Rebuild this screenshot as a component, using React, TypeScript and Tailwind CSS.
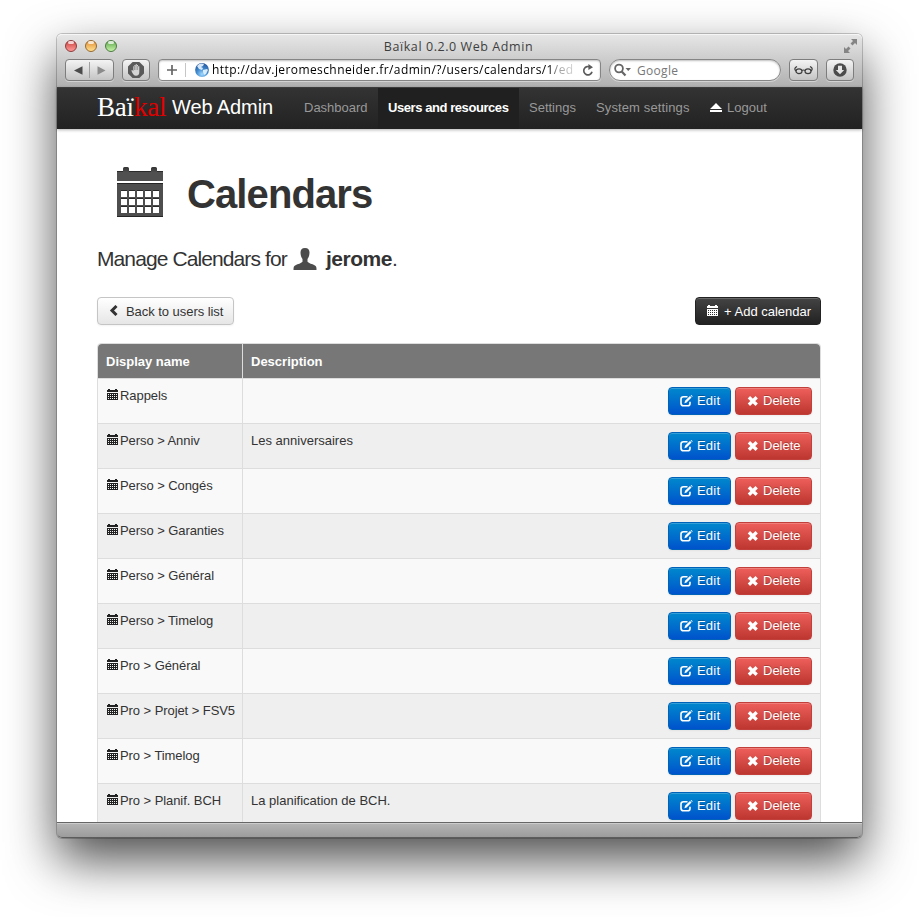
import React from "react";

function CalendarSmall({ className = "" }: { className?: string }) {
  return (
    <svg width="11" height="11" viewBox="0 0 11 11" className={className} fill="currentColor" shapeRendering="crispEdges">
      <rect x="1" y="0" width="2" height="1" />
      <rect x="8" y="0" width="2" height="1" />
      <rect x="0" y="1" width="11" height="2" />
      <path fillRule="evenodd" d="M0 4h11v7H0zM1 5v1h1V5zM3 5v1h1V5zM5 5v1h1V5zM7 5v1h1V5zM9 5v1h1V5zM1 7v1h1V7zM3 7v1h1V7zM5 7v1h1V7zM7 7v1h1V7zM9 7v1h1V7zM1 9v1h1V9zM3 9v1h1V9zM5 9v1h1V9zM7 9v1h1V9zM9 9v1h1V9z" />
    </svg>
  );
}

function CalendarLarge() {
  const cells = [0, 1, 2].flatMap((r) => [0, 1, 2, 3, 4].map((c) => [c, r]));
  return (
    <svg width="46" height="50" viewBox="0 0 46 50" className="shrink-0">
      <defs>
        <linearGradient id="calTop" x1="0" y1="0" x2="0" y2="1">
          <stop offset="0" stopColor="#333" />
          <stop offset="0.4" stopColor="#505050" />
          <stop offset="1" stopColor="#505050" />
        </linearGradient>
      </defs>
      <path d="M0 14V4h6V1.500q0-1.500 1.500-1.500h3Q12 0 12 1.500V4h22V1.500Q34 0 35.500 0h3Q40 0 40 1.500V4h6v10z" fill="url(#calTop)" />
      <path d="M0 4h6v1H0zM12 4h22v1H12zM40 4h6v1h-6z" fill="#2b2b2b" />
      <path d="M0 16h46v34H0z" fill="#4e4e4e" />
      <path d="M0 16h46v1H0zM0 49h46v1H0z" fill="#252525" />
      {cells.map(([c, r]) => (
        <g key={`${c}-${r}`}>
          <rect x={4 + c * 8} y={23 + r * 8} width="6" height="7" fill="#292929" />
          <rect x={4 + c * 8} y={24 + r * 8} width="6" height="6" fill="#fff" />
        </g>
      ))}
    </svg>
  );
}

function UserIcon() {
  return (
    <svg width="24" height="22" viewBox="0 0 24 22" className="shrink-0">
      <path d="M12 0C8.800 0 7.500 1.800 7.500 4.600c0 3 1 5 2 6.500v2.700C8 15.500 5 16 2.500 17.200.500 18.200.500 19.500.500 22h23c0-2.500 0-3.800-2-4.800C19 16 16 15.500 14.500 13.800v-2.700c1-1.500 2-3.500 2-6.500C16.500 1.800 15.200 0 12 0z" fill="#4c4c4c" />
    </svg>
  );
}

function EditIcon() {
  return (
    <svg width="13" height="12" viewBox="0 0 13 12" className="shrink-0" fill="none" stroke="#fff">
      <path d="M7.500 1.800H3.500Q1 1.800 1 4.200v4Q1 10.800 3.500 10.800h4Q10 10.800 10 8.400V6.800" strokeWidth="1.600" />
      <path d="M4.400 8.200l.7-2.400L10 1l1.500 1.500-4.900 5z" fill="#fff" stroke="none" />
      <path d="M10.600.400l.8-.400 1.200 1.200-.5.900z" fill="#fff" stroke="none" />
    </svg>
  );
}

function DeleteIcon() {
  return (
    <svg width="12" height="10" viewBox="0 0 12 10" className="shrink-0">
      <path d="M1.900 1.200L9.700 8.800M9.700 1.200L1.900 8.800" stroke="#fff" strokeWidth="3.300" />
    </svg>
  );
}

const toolBtn =
  "box-border flex h-[22px] items-center justify-center rounded-[4px] border border-[#7d7d7d] bg-linear-to-b from-[#f4f4f4] to-[#c4c4c4] shadow-[0_1px_0_rgba(255,255,255,0.4)]";

function Light({ tone }: { tone: string }) {
  return (
    <span className={`flex h-3 w-3 justify-center rounded-full border ${tone}`}>
      <span className="h-[3px] w-[6px] rounded-full bg-white/75" />
    </span>
  );
}

function Chrome() {
  return (
    <header className="h-[53px] rounded-t-[5px] border-t border-[#f6f6f6] bg-linear-to-b from-[#e6e6e6] to-[#b0b0b0] font-['Open_Sans','Noto_Sans',sans-serif]">
      <div className="flex h-[24px] items-center pr-[4px] pl-[8px]">
        <div className="mb-[2px] flex w-[60px] gap-2">
          <Light tone="border-[#8e3a3c] bg-linear-to-b from-[#c9403f] to-[#ff9a98]" />
          <Light tone="border-[#96682c] bg-linear-to-b from-[#e08f30] to-[#ffe08e]" />
          <Light tone="border-[#4b7a40] bg-linear-to-b from-[#5da84c] to-[#c5f3a8]" />
        </div>
        <h2 className="mb-px flex-1 pr-[11px] text-center text-[12.500px] leading-[20px] tracking-[0.570px] text-[#3e3e3e]">Baïkal 0.2.0 Web Admin</h2>
        <svg width="55" height="14" viewBox="0 0 55 14" fill="#858585" className="mb-[2px]">
          <path d="M48 0h6v6l-2-2-2.500 2.500-2-2L50 2zM41 14V8l2 2 2.500-2.500 2 2L45 12l2 2z" />
        </svg>
      </div>
      <div className="flex pl-[8px]">
        <div className={`${toolBtn} w-[49px]`}>
          <svg width="47" height="20" viewBox="0 0 47 20">
            <path d="M8 10.500l8.500-4.300v8.600z" fill="#4b4b4b" />
            <path d="M39.500 10.500L31.500 6.200v8.600z" fill="#8b8b8b" />
            <path d="M23.500 2v16" stroke="#a0a0a0" />
          </svg>
        </div>
        <div className={`${toolBtn} ml-2 w-[28px]`}>
          <svg width="18" height="18" viewBox="0 0 18 18">
            <path d="M5.600 1h6.800L17 5.600v6.800L12.400 17H5.600L1 12.400V5.600z" fill="#5a5a5a" />
            <path d="M4.300 9.400l1-.4 1 1.200V5.200h1.100V4h1.300v-.7h1.300V4H11v1.200h1.300V11c0 2.500-1 3.700-3.300 3.700-2.200 0-3-1.500-4.700-5.300z" fill="#d4d4d4" />
            <path d="M7.500 5v4M9 4v5M10.600 5v4" stroke="#777" strokeWidth=".6" />
          </svg>
        </div>
        <div className="ml-2 flex h-[22px] w-[443px] items-center rounded-[4px] border border-[#858585] bg-white pr-[6px] pl-[7px] shadow-[inset_0_1px_2px_rgba(0,0,0,0.25),0_1px_0_rgba(255,255,255,0.4)]">
          <svg width="46" height="18" viewBox="0 0 46 18" className="shrink-0">
            <defs>
              <radialGradient id="globe" cx=".5" cy=".8" r=".8">
                <stop offset="0" stopColor="#9fd8ff" />
                <stop offset=".5" stopColor="#4089cd" />
                <stop offset="1" stopColor="#25549b" />
              </radialGradient>
            </defs>
            <path d="M1 9h10M6 4v10" stroke="#666" strokeWidth="1.700" />
            <path d="M19.500 2v14" stroke="#c6c6c6" />
            <circle cx="36" cy="9" r="6.900" fill="url(#globe)" />
            <path d="M31 5q3-3.500 7-2l-1 2-2 1 2 1-1 2-3-1zM37 9l4-1 1 1-2 4-2 1-1-3z" fill="#e7f4ff" opacity=".9" />
          </svg>
          <span className="w-[364px] overflow-hidden bg-linear-to-r from-black from-92% via-[#999] via-95% to-[#ddd] bg-clip-text text-[12px] leading-[20px] tracking-[0.410px] whitespace-nowrap text-transparent">
            http://dav.jeromeschneider.fr/admin/?/users/calendars/1/ed
          </span>
          <svg width="12" height="13" viewBox="0 0 12 13" className="ml-auto shrink-0">
            <path d="M8.500 3.400A4.200 4.200 0 1 0 10 7.800" fill="none" stroke="#5b5b5b" strokeWidth="1.700" />
            <path d="M6.400 0v6L11 3.200z" fill="#5b5b5b" />
          </svg>
        </div>
        <div className="ml-2 flex h-[22px] w-[172px] items-center rounded-full border border-[#858585] bg-white pl-[4px] shadow-[inset_0_1px_2px_rgba(0,0,0,0.25),0_1px_0_rgba(255,255,255,0.4)]">
          <svg width="17" height="14" viewBox="0 0 17 14" className="shrink-0">
            <circle cx="5" cy="5.500" r="3.900" fill="none" stroke="#666" strokeWidth="1.800" />
            <path d="M7.700 8.500l3.800 4" stroke="#666" strokeWidth="2.200" />
            <path d="M11.500 5h5.500l-2.750 3z" fill="#666" />
          </svg>
          <span className="mt-px ml-[6px] text-[12px] leading-[20px] tracking-[0.300px] text-[#777]">Google</span>
        </div>
        <div className={`${toolBtn} ml-2 w-[29px]`}>
          <svg width="19" height="10" viewBox="0 0 19 10" fill="none" stroke="#3f3f3f" strokeWidth="1.200">
            <ellipse cx="5" cy="6.200" rx="3" ry="2.400" />
            <ellipse cx="14" cy="6.200" rx="3" ry="2.400" />
            <path d="M8 5.500q1.500-1 3 0M2 6Q0 4 1.500 2.500L3 1.500M17 6q2-2 .5-3.500L16 1.500" />
          </svg>
        </div>
        <div className={`${toolBtn} ml-2 w-[28px]`}>
          <svg width="14" height="14" viewBox="0 0 14 14">
            <circle cx="7" cy="7" r="6.700" fill="#4c4c4c" />
            <path d="M5 2.800h4V7h2.200L7 11.300 2.800 7H5z" fill="#e5e5e5" />
          </svg>
        </div>
      </div>
    </header>
  );
}

function NavBar() {
  return (
    <nav className="flex h-[42px] border-t border-[#3c3c3c] bg-linear-to-b from-[#333] to-[#222] pl-[40px] text-[13px] leading-[39px] text-[#999] shadow-[0_1px_3px_rgba(0,0,0,0.3)]">
      <a className="flex w-[197px] text-[20px] whitespace-nowrap text-white">
        <span className="w-[75px] font-['Liberation_Serif',serif] text-[27px] leading-[38px] tracking-[-0.200px]">
          Baï<span className="text-[#e00000]">kal</span>
        </span>
        <span className="tracking-[-0.100px]">Web Admin</span>
      </a>
      <a className="w-[84px] pl-[10px]">Dashboard</a>
      <a className="w-[141px] bg-[#202020] pl-[10px] font-bold tracking-[-0.430px] whitespace-nowrap text-white">Users and resources</a>
      <a className="w-[67px] pl-[10px]">Settings</a>
      <a className="w-[116px] pl-[10px] tracking-[0.120px]">System settings</a>
      <a className="flex h-[39px] items-center gap-[5px] pl-[8px]">
        <svg width="12" height="9" viewBox="0 0 12 9" fill="#fff" className="mb-px"><path d="M6 0l6 6H0zM0 7h12v2H0z" /></svg>
        Logout
      </a>
    </nav>
  );
}

const rows: [string, string][] = [
  ["Rappels", ""],
  ["Perso > Anniv", "Les anniversaires"],
  ["Perso > Congés", ""],
  ["Perso > Garanties", ""],
  ["Perso > Général", ""],
  ["Perso > Timelog", ""],
  ["Pro > Général", ""],
  ["Pro > Projet > FSV5", ""],
  ["Pro > Timelog", ""],
  ["Pro > Planif. BCH", "La planification de BCH."],
];

const actionBtn =
  "flex h-7 items-center rounded-[4px] border text-white shadow-[inset_0_1px_0_rgba(255,255,255,0.2),0_1px_2px_rgba(0,0,0,0.05)] [text-shadow:0_-1px_0_rgba(0,0,0,0.25)]";

function Row({ name, desc }: { name: string; desc: string }) {
  return (
    <div className="flex h-[45px] border-t border-[#ddd] bg-[#f9f9f9] even:bg-[#efefef]">
      <div className="flex w-[144px] pt-2 pl-[9px] tracking-[-0.070px] whitespace-nowrap">
        <CalendarSmall className="mt-[2px] mr-[2px] shrink-0 text-[#222]" />
        {name}
      </div>
      <div className="flex-1 border-l border-[#ddd] pt-2 pl-2">{desc}</div>
      <div className="flex gap-1 pt-2 pr-2">
        <button className={`${actionBtn} w-[63px] gap-[4px] border-[#0062b8] bg-linear-to-b from-[#0088cc] to-[#0052cc] pl-[11px] tracking-[0.200px]`}>
          <EditIcon />
          Edit
        </button>
        <button className={`${actionBtn} w-[77px] gap-[4px] border-[#c2403b] bg-linear-to-b from-[#ee5f5b] to-[#bd362f] pl-[11px]`}>
          <DeleteIcon />
          Delete
        </button>
      </div>
    </div>
  );
}

export default function App() {
  return (
    <div className="h-[917px] w-[919px] overflow-hidden bg-white px-[57px] pt-[34px] font-['Liberation_Sans',Arial,sans-serif] text-[13px] leading-[18px] text-[#333]">
      <div className="flex h-[804px] w-[805px] flex-col rounded-[5px] bg-white shadow-[0_0_0_1px_rgba(0,0,0,0.2),0_22px_50px_rgba(0,0,0,0.7)]">
        <Chrome />
        <NavBar />
        <main className="h-[693px] overflow-hidden px-[40px]">
          <div className="flex h-[88px] pt-[38px] pl-5">
            <CalendarLarge />
            <h1 className="ml-[24px] text-[40px] leading-[54px] font-bold tracking-[-0.900px]">Calendars</h1>
          </div>
          <p className="mt-[27px] flex h-[30px] items-center text-[21px] leading-[30px] whitespace-nowrap">
            <span className="w-[196px] tracking-[-0.900px]">Manage Calendars for</span>
            <UserIcon />
            <span className="ml-[9px] font-bold tracking-[-0.500px]">jerome</span>.
          </p>
          <div className="mt-[23px] flex w-[724px] justify-between">
            <button className="flex h-7 w-[137px] items-center rounded-[4px] border border-[#c5c5c5] bg-linear-to-b from-white to-[#e6e6e6] pt-px pl-[11px] tracking-[-0.050px] shadow-[0_1px_2px_rgba(0,0,0,0.05)]">
              <svg width="9" height="11" viewBox="0 0 9 11" className="mr-[8px] mb-[3px]"><path d="M7.500 1L3 5.500 7.500 10" fill="none" stroke="#333" strokeWidth="3" /></svg>
              Back to users list
            </button>
            <button className="flex h-7 w-[126px] items-center rounded-[4px] border border-[#222] bg-linear-to-b from-[#444] to-[#222] pt-px pl-[11px] text-white shadow-[inset_0_1px_0_rgba(255,255,255,0.2)]">
              <CalendarSmall className="mr-[6px] mb-[3px]" />
              + Add calendar
            </button>
          </div>
          <section className="mt-[18px] w-[724px] rounded-t-[4px] border border-[#ddd]">
            <div className="flex h-[34px] rounded-t-[4px] bg-[#777] font-bold text-white">
              <div className="w-[144px] pt-[9px] pl-2">Display name</div>
              <div className="flex-1 border-l border-[#ddd] pt-[9px] pl-2">Description</div>
            </div>
            <div>
              {rows.map(([name, desc]) => (
                <Row key={name} name={name} desc={desc} />
              ))}
            </div>
          </section>
        </main>
        <footer className="h-[16px] rounded-b-[5px] border-t border-b border-t-[#666] border-b-[#5c5c5c] bg-linear-to-b from-[#b5b5b5] to-[#9c9c9c] shadow-[inset_0_1px_0_#ccc]" />
      </div>
    </div>
  );
}
